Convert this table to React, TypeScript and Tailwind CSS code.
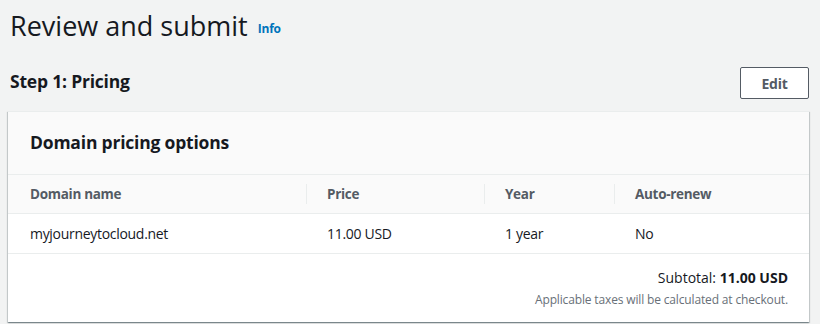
const columns = [
  { label: 'Domain name', width: 'w-[298px]', divider: false },
  { label: 'Price', width: 'w-[178px]', divider: true },
  { label: 'Year', width: 'w-[130px]', divider: true },
  { label: 'Auto-renew', width: 'flex-1', divider: true },
]

const row = ['myjourneytocloud.net', '11.00 USD', '1 year', 'No']

export default function App() {
  return (
    <div className="w-[820px] h-[324px] overflow-hidden bg-[#f2f3f3] font-['Open_Sans',sans-serif] text-[#16191f]">
      <div className="flex items-end pl-[10px] pt-[6px] h-[44px]">
        <h1 className="text-[27px] leading-[36px] font-normal">Review and submit</h1>
        <a className="ml-[10px] mb-[6px] text-[12px] font-bold text-[#0073bb] tracking-[-0.2px]">Info</a>
      </div>

      <div className="flex items-center justify-between pl-[10px] pr-[11px] mt-[23px] h-[32px]">
        <h2 className="text-[17.5px] font-bold leading-[24px] tracking-[-0.2px] -mt-[4px]">Step 1: Pricing</h2>
        <button className="w-[69px] h-[32px] rounded-[2px] border border-[#545b64] bg-white text-[14px] font-bold text-[#545b64] tracking-[-0.2px]">
          Edit
        </button>
      </div>

      <div className="ml-[8px] mt-[12px] w-[801px] bg-white border-t border-[#eaeded] shadow-[0_1px_1px_0_rgba(0,28,36,0.3),1px_1px_1px_0_rgba(0,28,36,0.15),-1px_1px_1px_0_rgba(0,28,36,0.15)]">
        <div className="h-[63px] bg-[#fafafa] flex items-center px-[22px] border-b border-[#eaeded]">
          <h3 className="text-[17.5px] font-bold leading-[24px] tracking-[-0.2px] -mt-[2px]">Domain pricing options</h3>
        </div>

        <div className="flex h-[39px] bg-[#fafafa] border-b border-[#eaeded] items-center">
          {columns.map((c) => (
            <div key={c.label} className={`${c.width} h-full flex items-center`}>
              {c.divider && <div className="w-px h-[20px] bg-[#eaeded]" />}
              <span className={`${c.divider ? 'pl-[20px]' : 'pl-[22px]'} text-[13.5px] font-bold tracking-[-0.3px] text-[#545b64]`}>
                {c.label}
              </span>
            </div>
          ))}
        </div>

        <div className="flex h-[40px] border-b border-[#eaeded] items-center">
          {columns.map((c, i) => (
            <div key={c.label} className={`${c.width} ${c.divider ? 'pl-[21px]' : 'pl-[22px]'} text-[14px] tracking-[-0.3px]`}>
              {row[i]}
            </div>
          ))}
        </div>

        <div className="flex flex-col items-end pr-[21px] pt-[13px] pb-[12px]">
          <div className="text-[14px] leading-[22px]">
            Subtotal: <span className="font-bold">11.00 USD</span>
          </div>
          <div className="text-[12px] leading-[20px] mt-[1px] tracking-[-0.15px] text-[#687078]">
            Applicable taxes will be calculated at checkout.
          </div>
        </div>
      </div>
    </div>
  )
}
